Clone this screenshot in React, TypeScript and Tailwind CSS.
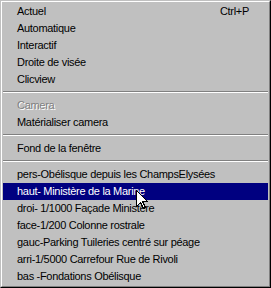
type MenuEntry =
  | { kind: 'item'; label: string; shortcut?: string; disabled?: boolean; selected?: boolean }
  | { kind: 'sep' }

const ENTRIES: MenuEntry[] = [
  { kind: 'item', label: 'Actuel', shortcut: 'Ctrl+P' },
  { kind: 'item', label: 'Automatique' },
  { kind: 'item', label: 'Interactif' },
  { kind: 'item', label: 'Droite de visée' },
  { kind: 'item', label: 'Clicview' },
  { kind: 'sep' },
  { kind: 'item', label: 'Camera', disabled: true },
  { kind: 'item', label: 'Matérialiser camera' },
  { kind: 'sep' },
  { kind: 'item', label: 'Fond de la fenêtre' },
  { kind: 'sep' },
  { kind: 'item', label: 'pers-Obélisque depuis les ChampsElysées' },
  { kind: 'item', label: 'haut- Ministère de la Marine', selected: true },
  { kind: 'item', label: 'droi- 1/1000 Façade Ministère' },
  { kind: 'item', label: 'face-1/200 Colonne rostrale' },
  { kind: 'item', label: 'gauc-Parking Tuileries centré sur péage' },
  { kind: 'item', label: 'arri-1/5000 Carrefour Rue de Rivoli' },
  { kind: 'item', label: 'bas -Fondations Obélisque' },
]

function Cursor() {
  return (
    <svg
      className="pointer-events-none absolute left-[136px] top-[190px]"
      width="13"
      height="20"
      viewBox="0 0 13 20"
      shapeRendering="crispEdges"
    >
      <path d="M0.5 0.5 V16.5 L4.5 12.5 L7.5 18.5 L9.5 17.5 L6.5 11.5 H11.5 Z" fill="#ffffff" stroke="#000000" strokeWidth="1" />
    </svg>
  )
}

export default function App() {
  return (
    <div className="relative h-[288px] w-[271px] overflow-hidden bg-[#c0c0c0] font-['Liberation_Sans',Arial,sans-serif] text-[11px] tracking-[-0.3px]">
      <div className="h-full w-full border-l border-t border-l-[#c0c0c0] border-t-[#c0c0c0] border-r border-b border-r-black border-b-black">
        <div className="h-full w-full border-l border-t border-l-white border-t-white border-r border-b border-r-[#808080] border-b-[#808080] p-px">
          {ENTRIES.map((entry, index) => {
            if (entry.kind === 'sep') {
              return (
                <div key={index} className="h-[9px] pt-[3px]">
                  <div className="h-px bg-[#808080]" />
                  <div className="h-px bg-white" />
                </div>
              )
            }

            const rowClass = entry.selected ? 'bg-[#000080] text-white' : 'text-black'

            return (
              <div key={index} className={`flex h-[17px] items-center justify-between pl-[14px] pr-[19px] leading-[17px] ${rowClass}`}>
                {entry.disabled ? (
                  <span className="text-[#808080] [text-shadow:1px_1px_0_#ffffff]">{entry.label}</span>
                ) : (
                  <span>{entry.label}</span>
                )}
                {entry.shortcut ? <span>{entry.shortcut}</span> : null}
              </div>
            )
          })}
        </div>
      </div>
      <Cursor />
    </div>
  )
}
